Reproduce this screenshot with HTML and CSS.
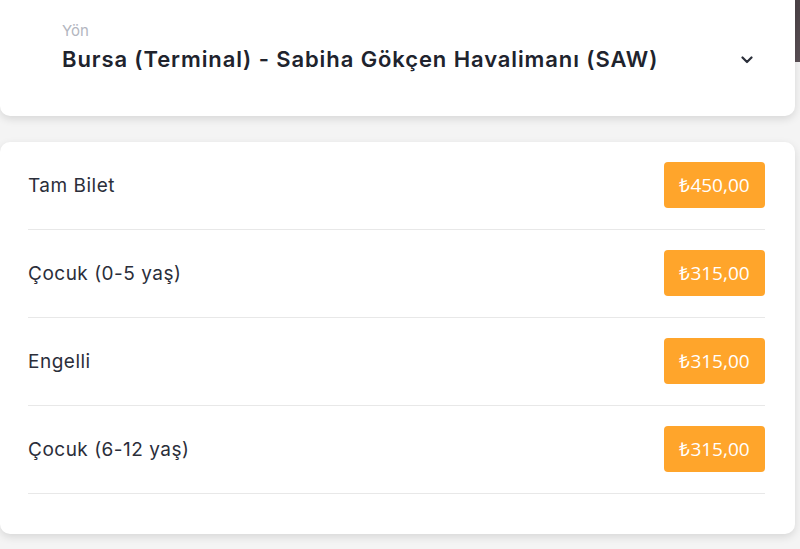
FILE: index.html
```html
<!DOCTYPE html>
<html lang="tr">
<head>
<meta charset="utf-8">
<link rel="stylesheet" href="styles.css">
</head>
<body>
<div class="page">
  <div class="card route">
    <div class="route-text">
      <div class="route-label">Yön</div>
      <div class="route-value">Bursa (Terminal) - Sabiha Gökçen Havalimanı (SAW)</div>
    </div>
    <svg class="chevron" width="12" height="8" viewBox="0 0 12 8"><path d="M1.5 1.5 L6 6 L10.5 1.5" fill="none" stroke="#2b2f3a" stroke-width="2.2" stroke-linecap="round" stroke-linejoin="round"/></svg>
  </div>
  <div class="card prices">
    <div class="row"><span class="name">Tam Bilet</span><span class="price">₺450,00</span></div>
    <div class="row"><span class="name">Çocuk (0-5 yaş)</span><span class="price">₺315,00</span></div>
    <div class="row"><span class="name">Engelli</span><span class="price">₺315,00</span></div>
    <div class="row"><span class="name">Çocuk (6-12 yaş)</span><span class="price">₺315,00</span></div>
  </div>
</div>
</body>
</html>
```

FILE: styles.css
```css
html, body {
  margin: 0;
  padding: 0;
}
body {
  background: linear-gradient(#4b4247, #5a5055) right top / 5px 62px no-repeat, #f4f4f4;
  font-family: "Inter", "Open Sans", "Liberation Sans", sans-serif;
  height: 549px;
  overflow: hidden;
}
.page {
  width: 795px;
  display: flex;
  flex-direction: column;
  gap: 26px;
}
.card {
  background: #fff;
  border-radius: 10px;
  box-shadow: 0 3px 8px rgba(0, 0, 0, 0.12);
}
.route {
  border-radius: 0 0 10px 10px;
  height: 116px;
  box-sizing: border-box;
  padding: 20px 42px 0 62px;
  display: flex;
  align-items: flex-start;
  justify-content: space-between;
}
.route-label {
  font-size: 15px;
  color: #b3b6c0;
  line-height: 22px;
}
.route-value {
  font-size: 22px;
  font-weight: 600;
  color: #20232d;
  line-height: 34px;
  letter-spacing: 0.9px;
}
.chevron {
  margin-top: 36px;
}
.prices {
  padding: 0 30px 40px 28px;
}
.row {
  display: flex;
  justify-content: space-between;
  align-items: center;
  padding: 20px 0 21px;
  border-bottom: 1px solid #e8e8e8;
}
.name {
  font-size: 19px;
  color: #2b2e3a;
  font-weight: 400;
  letter-spacing: 0.5px;
}
.price {
  font-family: "Open Sans", sans-serif;
  background: #ffa52b;
  color: #fff;
  font-size: 19px;
  height: 46px;
  width: 101px;
  box-sizing: border-box;
  border-radius: 4px;
  display: flex;
  align-items: center;
  justify-content: center;
}
```
